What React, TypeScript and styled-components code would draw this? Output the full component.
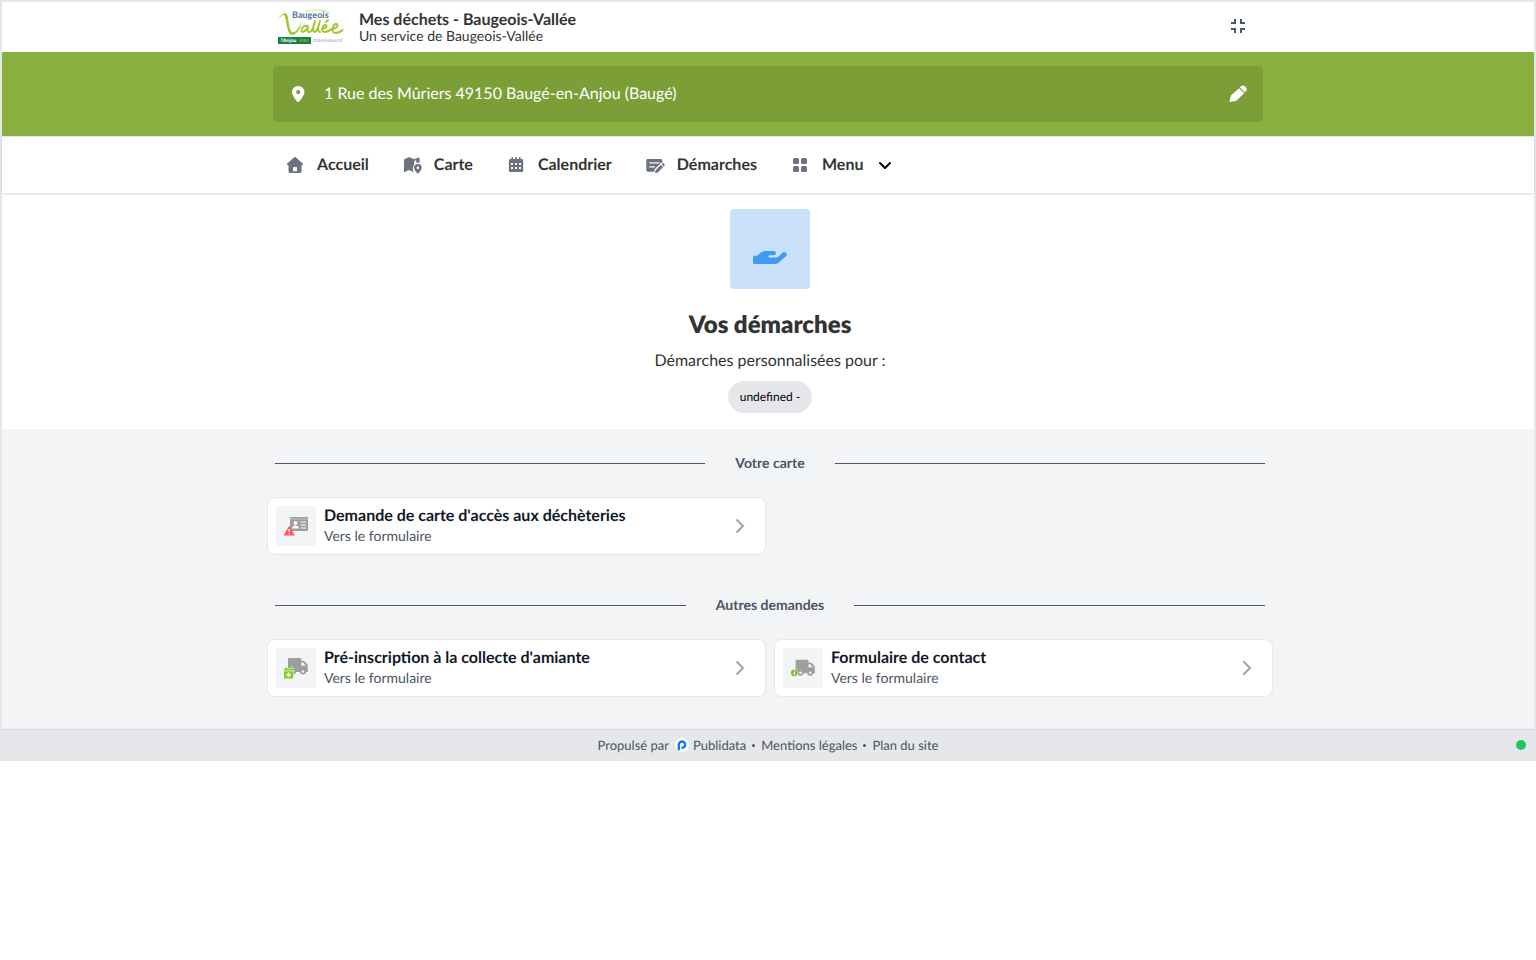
import React from "react";
import styled, { createGlobalStyle } from "styled-components";

const GlobalStyle = createGlobalStyle`
  *, *::before, *::after { box-sizing: border-box; }
  body {
    margin: 0;
    background: #fff;
    color: #333;
    font-family: Lato, "Liberation Sans", sans-serif;
    font-size: 16px;
    line-height: 24px;
    text-rendering: geometricPrecision;
  }
  a { color: inherit; text-decoration: none; }
  button { font: inherit; color: inherit; border: 0; background: none; padding: 0; cursor: pointer; text-rendering: inherit; }
  h1, h2, p { margin: 0; }
  svg { display: block; flex: none; }
`;

const Frame = styled.div`
  border: 2px solid #e5e7eb;
  border-bottom: 0;
`;

const Container = styled.div`
  width: 100%;
  max-width: 990px;
  margin: 0 auto;
`;

const TopBar = styled(Container)`
  display: flex;
  align-items: center;
  height: 50px;
  padding: 0 13px 0 4px;
`;

const Brand = styled.a`
  display: flex;
  align-items: center;
  gap: 14px;
  flex: 1;
`;

const BrandName = styled.span`
  display: block;
  font-weight: 700;
  line-height: 18px;
`;

const BrandOwner = styled.span`
  display: block;
  font-size: 14px;
  line-height: 14px;
`;

const IconButton = styled.button`
  color: #4b5563;
`;

const AddressBand = styled.div`
  background: #89b03e;
  padding: 14px 0;
`;

const AddressButton = styled.button`
  display: flex;
  align-items: center;
  gap: 16px;
  width: 100%;
  height: 56px;
  padding: 0 16px;
  border-radius: 4px;
  background: #7b9e37;
  color: #fff;
  text-align: left;
`;

const AddressText = styled.span`
  flex: 1;
`;

const Nav = styled.nav`
  border-top: 1px solid #e5e7eb;
  box-shadow: 0 1px 2px rgba(0, 0, 0, 0.16);
`;

const NavList = styled(Container)`
  display: flex;
  align-items: center;
  gap: 33px;
  height: 56px;
  padding: 0 12px;
`;

const NavItem = styled.a`
  display: flex;
  align-items: center;
  gap: 12px;
  font-weight: 700;
  svg { color: #6b7280; }
  svg:last-child:not(:first-child) { color: #000; }
`;

const Hero = styled.section`
  display: flex;
  flex-direction: column;
  align-items: center;
  padding: 16px 0 16px 4px;
`;

const HeroIcon = styled.div`
  border-radius: 4px;
  background: #c9e0f9;
  color: #4299f0;
`;

const HeroTitle = styled.h1`
  margin-top: 20px;
  font-size: 24px;
  font-weight: 800;
  line-height: 32px;
`;

const HeroText = styled.p`
  margin: 8px 0;
`;

const Pill = styled.span`
  padding: 0 12px;
  border-radius: 16px;
  background: #e5e7eb;
  color: #000;
  font-size: 12px;
  line-height: 32px;
`;

const Requests = styled.main`
  display: flex;
  flex-direction: column;
  gap: 40px;
  padding: 24px 0 32px 4px;
  background: #f3f4f6;
`;

const SectionTitle = styled.h2`
  display: flex;
  align-items: center;
  gap: 30px;
  color: #4b5563;
  font-size: 14px;
  font-weight: 700;
  line-height: 20px;
  &::before, &::after {
    content: "";
    flex: 1;
    height: 1px;
    background: #4b5563;
  }
`;

const Cards = styled.div`
  display: grid;
  grid-template-columns: 1fr 1fr;
  gap: 8px;
  margin: 24px -8px 0;
`;

const Card = styled.a`
  display: flex;
  align-items: center;
  gap: 8px;
  height: 58px;
  padding: 0 15px 0 8px;
  border: 1px solid #e5e7eb;
  border-radius: 8px;
  background: #fff;
  > svg { color: #9ca3af; }
`;

const CardIcon = styled.span`
  border-radius: 4px;
  background: #f3f4f6;
`;

const CardBody = styled.span`
  flex: 1;
`;

const CardTitle = styled.span`
  display: block;
  color: #111827;
  font-weight: 700;
  line-height: 20px;
`;

const CardHint = styled.span`
  display: block;
  color: #4b5563;
  font-size: 14px;
  line-height: 20px;
`;

const Footer = styled.footer`
  display: grid;
  grid-template-columns: 1fr auto 1fr;
  align-items: center;
  height: 32px;
  padding: 0 10px 1px;
  border-top: 1px solid #d3d6da;
  background: #e5e7eb;
  color: #4b5563;
  font-size: 13px;
  line-height: 20px;
`;

const FooterLinks = styled.div`
  grid-column: 2;
  display: flex;
  align-items: center;
  gap: 6px;
`;

const Publisher = styled.a`
  display: flex;
  align-items: center;
  gap: 4px;
`;

const Separator = styled.span`
  width: 3px;
  height: 3px;
  border-radius: 50%;
  background: #4b5563;
`;

const StatusDot = styled.span`
  justify-self: end;
  width: 10px;
  height: 10px;
  border-radius: 50%;
  background: #22c55e;
`;

const Logo = () => (
  <svg width="68" height="36" viewBox="0 0 68 36" role="img" aria-label="Baugeois-Vallée">
    <path d="M0 11C3 7 5 5 8 4c3 0 3 5 4 11 1 5 2 9 5 8 3-1 5-5 7-9 0 5-4 12-9 12-4 0-5-8-6-14C8 8 8 6 6 6 4 7 2 9 0 11Z" fill="#a5c72e" />
    <path d="M28 3C36 0 46 0 53 4" fill="none" stroke="#c4d968" strokeWidth=".7" />
    <text x="15" y="9" fontSize="9" fontWeight="900" fill="#5d7fa3">Baugeois</text>
    <g fill="none" stroke="#a5c72e" strokeWidth="1.900" strokeLinecap="round" strokeLinejoin="round">
      <path d="M31 17c-4-1-7 2-6.500 5 .5 2 4 1 6.500-4-1 4 0 6 2 5 2-1 4-6 5-11-2 5-3 11 0 11 2-1 4-7 5-11-2 6-3 11 0 11" />
      <path d="M45 20c4 0 6-4 3.500-4-3 0-5 7-1 7 3 0 5-1 7-3 5 0 8-4 5-5-4 0-6 9-1 9 3 0 5-1 7-3M49 13l2-2" />
    </g>
    <rect x="1" y="28" width="33" height="7" fill="#168044" />
    <text x="4" y="33" fontSize="5" fontWeight="900" fill="#fff">l'Anjou</text>
    <text x="22" y="33" fontSize="4" fill="#b9d532">VERT</text>
    <text x="36" y="33" fontSize="4" fill="#7894ae">COMMUNAUTÉ</text>
  </svg>
);

const ExitFullscreenIcon = () => (
  <svg width="24" height="24" viewBox="0 0 24 24" fill="currentColor" aria-hidden="true">
    <path d="M5 15h3v3h2v-5H5v2Zm3-8H5v2h5V4H8v3Zm6 11h2v-3h3v-2h-5v5Zm2-11V4h-2v5h5V7h-3Z" />
  </svg>
);

const PinIcon = () => (
  <svg width="19" height="20" viewBox="0 0 19 20" fill="currentColor" fillRule="evenodd" aria-hidden="true">
    <path d="M9.200 2A6.200 6.200 0 0 0 3 8.200c0 2.900 3.700 7.600 5.400 9.500.4.500 1.200.5 1.600 0 1.700-1.900 5.400-6.600 5.400-9.500A6.200 6.200 0 0 0 9.200 2Zm0 4a2.100 2.100 0 1 1 0 4.200 2.100 2.100 0 0 1 0-4.200Z" />
  </svg>
);

const PencilIcon = () => (
  <svg width="18" height="20" viewBox="0 0 18 20" fill="currentColor" aria-hidden="true">
    <path d="m10.100 4.200 5 5-7 6.900a4 4 0 0 1-1.600.9l-5.400 1.100c-.4.100-.7-.2-.6-.6l1.100-4.900c.1-.6.400-1.100.9-1.600l7.600-6.800ZM10.900 3.400l.7-.6a3.300 3.300 0 0 1 4.900 4.900l-.6.700-5-5Z" />
  </svg>
);

const HomeIcon = () => (
  <svg width="20" height="20" viewBox="0 0 20 20" fill="currentColor" fillRule="evenodd" aria-hidden="true">
    <path d="M9.200 2.300a1.200 1.200 0 0 1 1.600 0l6.900 6.300c.7.700.3 1.700-.6 1.700h-.6v5.900c0 1-.8 1.800-1.800 1.800H5.300c-1 0-1.800-.8-1.800-1.800v-5.900h-.6c-.9 0-1.300-1-.6-1.700l6.900-6.300ZM8.800 12c-.5 0-.8.300-.8.800v3.400h4v-3.400c0-.5-.3-.8-.8-.8H8.800Z" />
  </svg>
);

const MapIcon = () => (
  <svg width="20" height="20" viewBox="0 0 20 20" fill="currentColor" fillRule="evenodd" aria-hidden="true">
    <path d="M2 5.200c0-.6.400-1 .9-1.200l3.700-1.700c.3-.1.700-.1 1 0l4.600 2 4.400-1.700c.5-.2 1 .1 1 .6v4.700a5 5 0 0 0-3.400-.2V5.300l-2 .8v3.600a5.200 5.200 0 0 0-1.300 4.800l.7 2.600-4.800-2-4 1.900c-.5.200-.8 0-.8-.6V5.200Z" />
    <path d="M15.900 9a3.800 3.800 0 0 0-3.800 3.800c0 1.900 2 4 3.200 5.500.3.400.9.400 1.200 0 1.200-1.500 3.200-3.600 3.200-5.500A3.800 3.800 0 0 0 15.900 9Zm0 2.500a1.300 1.300 0 1 1 0 2.600 1.300 1.300 0 0 1 0-2.600Z" />
  </svg>
);

const CalendarIcon = () => (
  <svg width="20" height="20" viewBox="0 0 20 20" fill="currentColor" fillRule="evenodd" aria-hidden="true">
    <path d="M5.500 2H7v2h2.300V2h1.500v2H13V2h1.500v2h1c1 0 1.700.7 1.700 1.600v9.800c0 .9-.7 1.600-1.600 1.600H4.500c-.9 0-1.600-.7-1.600-1.600V5.600c0-.9.700-1.600 1.600-1.600h1V2ZM5 8v2h2V8H5Zm4 0v2h2V8H9Zm4 0v2h2V8h-2ZM5 12v2h2v-2H5Zm4 0v2h2v-2H9Zm4 0v2h2v-2h-2Z" />
  </svg>
);

const FormIcon = () => (
  <svg width="20" height="20" viewBox="0 0 20 20" fill="currentColor" aria-hidden="true">
    <path fillRule="evenodd" d="M3 4h12.600c1 0 1.700.7 1.700 1.700v1.800c-.7 0-1.200.3-1.700.8l-5.700 5.700-.7 2.800H3c-1 0-1.700-.7-1.700-1.700V5.700C1.300 4.700 2 4 3 4Zm1.200 3.200v1.400h10.200V7.200H4.200Zm0 4v1.400h5.600v-1.400H4.200Z" />
    <path d="m16 9.900 2.200 2.200-4.900 5c-.3.300-.6.500-1 .6l-1.700.4c-.3.100-.6-.2-.5-.5l.4-1.700c.1-.4.300-.8.600-1.100L16 9.900ZM16.700 9.200l.4-.4c.6-.6 1.500-.6 2.100 0 .6.600.6 1.500 0 2.100l-.4.500-2.100-2.200Z" />
  </svg>
);

const GridIcon = () => (
  <svg width="20" height="20" viewBox="0 0 20 20" fill="currentColor" aria-hidden="true">
    <rect x="3" y="3" width="6" height="6" rx="1.500" />
    <rect x="11" y="3" width="6" height="6" rx="1.500" />
    <rect x="3" y="11" width="6" height="6" rx="1.500" />
    <rect x="11" y="11" width="6" height="6" rx="1.500" />
  </svg>
);

const ChevronDownIcon = () => (
  <svg width="20" height="20" viewBox="0 0 20 20" fill="none" stroke="currentColor" strokeWidth="2" strokeLinecap="round" strokeLinejoin="round" aria-hidden="true">
    <path d="m5 8 5 5 5-5" />
  </svg>
);

const ChevronRightIcon = () => (
  <svg width="20" height="20" viewBox="0 0 20 20" fill="none" stroke="currentColor" strokeWidth="2" aria-hidden="true">
    <path d="m6.500 3.500 6.500 6.500-6.500 6.500" />
  </svg>
);

const HandIcon = () => (
  <svg width="80" height="80" viewBox="0 0 80 80" fill="currentColor" aria-hidden="true">
    <path d="M24.500 46.800H27.200L30 44.300a8 8 0 0 1 5.500-2.200h8.300c1.300 0 2.200.9 2.200 2 0 1.200-.9 2.100-2.200 2.100h-4.300c-1.300 0-1.300 2.400 0 2.400h6.700c.8 0 1.500-.3 2.100-.8l4.400-4.100a2.500 2.500 0 0 1 3.600 3.400l-7.500 6.400a6 6 0 0 1-4 1.500H24.500c-.9 0-1.500-.6-1.500-1.500v-5.200c0-.9.600-1.500 1.500-1.500Z" />
  </svg>
);

const IdCardAlertIcon = () => (
  <svg width="40" height="40" viewBox="0 0 40 40" aria-hidden="true">
    <rect x="14" y="11" width="18" height="14" rx="1" fill="#9e9e9e" />
    <path d="M14 13h18" stroke="#c4c4c4" />
    <circle cx="19.500" cy="17" r="2" fill="#fff" />
    <path d="M16 22.500c0-4 7-4 7 0ZM24.500 15.500h5.500v1h-5.500Zm0 3h5.500v1h-5.500Zm0 3h5.500v1h-5.500Z" fill="#fff" />
    <path d="m13.200 19.800 5.200 9c.2.400 0 .7-.4.700H8.400c-.4 0-.6-.3-.4-.7l5.200-9Z" fill="#ff5757" />
    <path d="M13.200 23v3.300M13.200 27.200v1.200" stroke="#fff" strokeWidth="1.200" />
  </svg>
);

const Truck = () => (
  <>
    <path d="M13.200 10H24c.7 0 1.200.5 1.200 1.200v1.600h1.900c.6 0 1.100.2 1.500.6l2.500 2.600c.4.400.6.900.6 1.400V22h.2v2H12V11.200c0-.7.5-1.200 1.200-1.200Zm12 4.600v3.200h4.600L27 14.600Z" fill="#9e9e9e" fillRule="evenodd" />
    <g fill="#f3f4f6" stroke="#9e9e9e" strokeWidth="1.700">
      <circle cx="17" cy="23.500" r="2.200" />
      <circle cx="27" cy="23.500" r="2.200" />
    </g>
  </>
);

const TruckCalendarIcon = () => (
  <svg width="40" height="40" viewBox="0 0 40 40" aria-hidden="true">
    <Truck />
    <path d="M7.500 20h2v-1.500H11V20h4v-1.500h1.500V20h1v11h-10Z" fill="#f3f4f6" />
    <path d="M9.500 19.500H11v1.300h4v-1.300h1.500v1.300h.8v1.700H8v-1.700h1.500v-1.300ZM8 23.200h9.300v6.500c0 .5-.3.800-.8.800H8.800c-.5 0-.8-.3-.8-.8v-6.500Z" fill="#84cc27" />
    <path d="M12.600 24.500v4.600M10.300 26.800h4.600" stroke="#fff" strokeWidth="1.600" />
  </svg>
);

const TruckInfoIcon = () => (
  <svg width="40" height="40" viewBox="0 0 40 40" aria-hidden="true">
    <g transform="translate(1 2) scale(.97 .97)"><Truck /></g>
    <circle cx="11.300" cy="24.800" r="3.900" fill="#f3f4f6" />
    <circle cx="11.300" cy="24.800" r="3.400" fill="#87bd31" />
    <path d="M11.400 22.500v1.100M10.400 24.700h1v2.200" stroke="#fff" fill="none" />
  </svg>
);

const PublidataIcon = () => (
  <svg width="14" height="14" viewBox="0 0 14 14" aria-hidden="true">
    <circle cx="7" cy="7" r="7" fill="#fff" />
    <path d="M3.800 12.200V6.800a3.200 3.200 0 1 1 3.400 3.100H6.400" fill="none" stroke="#0879f2" strokeWidth="2.300" />
  </svg>
);

const navLinks = [
  { label: "Accueil", Icon: HomeIcon },
  { label: "Carte", Icon: MapIcon },
  { label: "Calendrier", Icon: CalendarIcon },
  { label: "Démarches", Icon: FormIcon },
];

const sections = [
  { title: "Votre carte", items: [{ title: "Demande de carte d'accès aux déchèteries", Icon: IdCardAlertIcon }] },
  {
    title: "Autres demandes",
    items: [
      { title: "Pré-inscription à la collecte d'amiante", Icon: TruckCalendarIcon },
      { title: "Formulaire de contact", Icon: TruckInfoIcon },
    ],
  },
];

export default function App() {
  return (
    <>
      <GlobalStyle />
      <Frame>
        <header>
          <TopBar>
            <Brand href="#">
              <Logo />
              <span>
                <BrandName>Mes déchets - Baugeois-Vallée</BrandName>
                <BrandOwner>Un service de Baugeois-Vallée</BrandOwner>
              </span>
            </Brand>
            <IconButton type="button" aria-label="Quitter le plein écran">
              <ExitFullscreenIcon />
            </IconButton>
          </TopBar>
          <AddressBand>
            <Container>
              <AddressButton type="button">
                <PinIcon />
                <AddressText>1 Rue des Mûriers 49150 Baugé-en-Anjou (Baugé)</AddressText>
                <PencilIcon />
              </AddressButton>
            </Container>
          </AddressBand>
          <Nav>
            <NavList>
              {navLinks.map(({ label, Icon }) => (
                <NavItem href="#" key={label}>
                  <Icon />
                  {label}
                </NavItem>
              ))}
              <NavItem as="button" type="button" aria-haspopup="menu">
                <GridIcon />
                Menu
                <ChevronDownIcon />
              </NavItem>
            </NavList>
          </Nav>
        </header>
        <Hero>
          <HeroIcon>
            <HandIcon />
          </HeroIcon>
          <HeroTitle>Vos démarches</HeroTitle>
          <HeroText>Démarches personnalisées pour :</HeroText>
          <Pill>undefined -</Pill>
        </Hero>
        <Requests>
          {sections.map((section) => (
            <Container as="section" key={section.title}>
              <SectionTitle>{section.title}</SectionTitle>
              <Cards>
                {section.items.map(({ title, Icon }) => (
                  <Card href="#" key={title}>
                    <CardIcon>
                      <Icon />
                    </CardIcon>
                    <CardBody>
                      <CardTitle>{title}</CardTitle>
                      <CardHint>Vers le formulaire</CardHint>
                    </CardBody>
                    <ChevronRightIcon />
                  </Card>
                ))}
              </Cards>
            </Container>
          ))}
        </Requests>
      </Frame>
      <Footer>
        <FooterLinks>
          <span>Propulsé par</span>
          <Publisher href="#">
            <PublidataIcon />
            Publidata
          </Publisher>
          <Separator />
          <a href="#">Mentions légales</a>
          <Separator />
          <a href="#">Plan du site</a>
        </FooterLinks>
        <StatusDot />
      </Footer>
    </>
  );
}
